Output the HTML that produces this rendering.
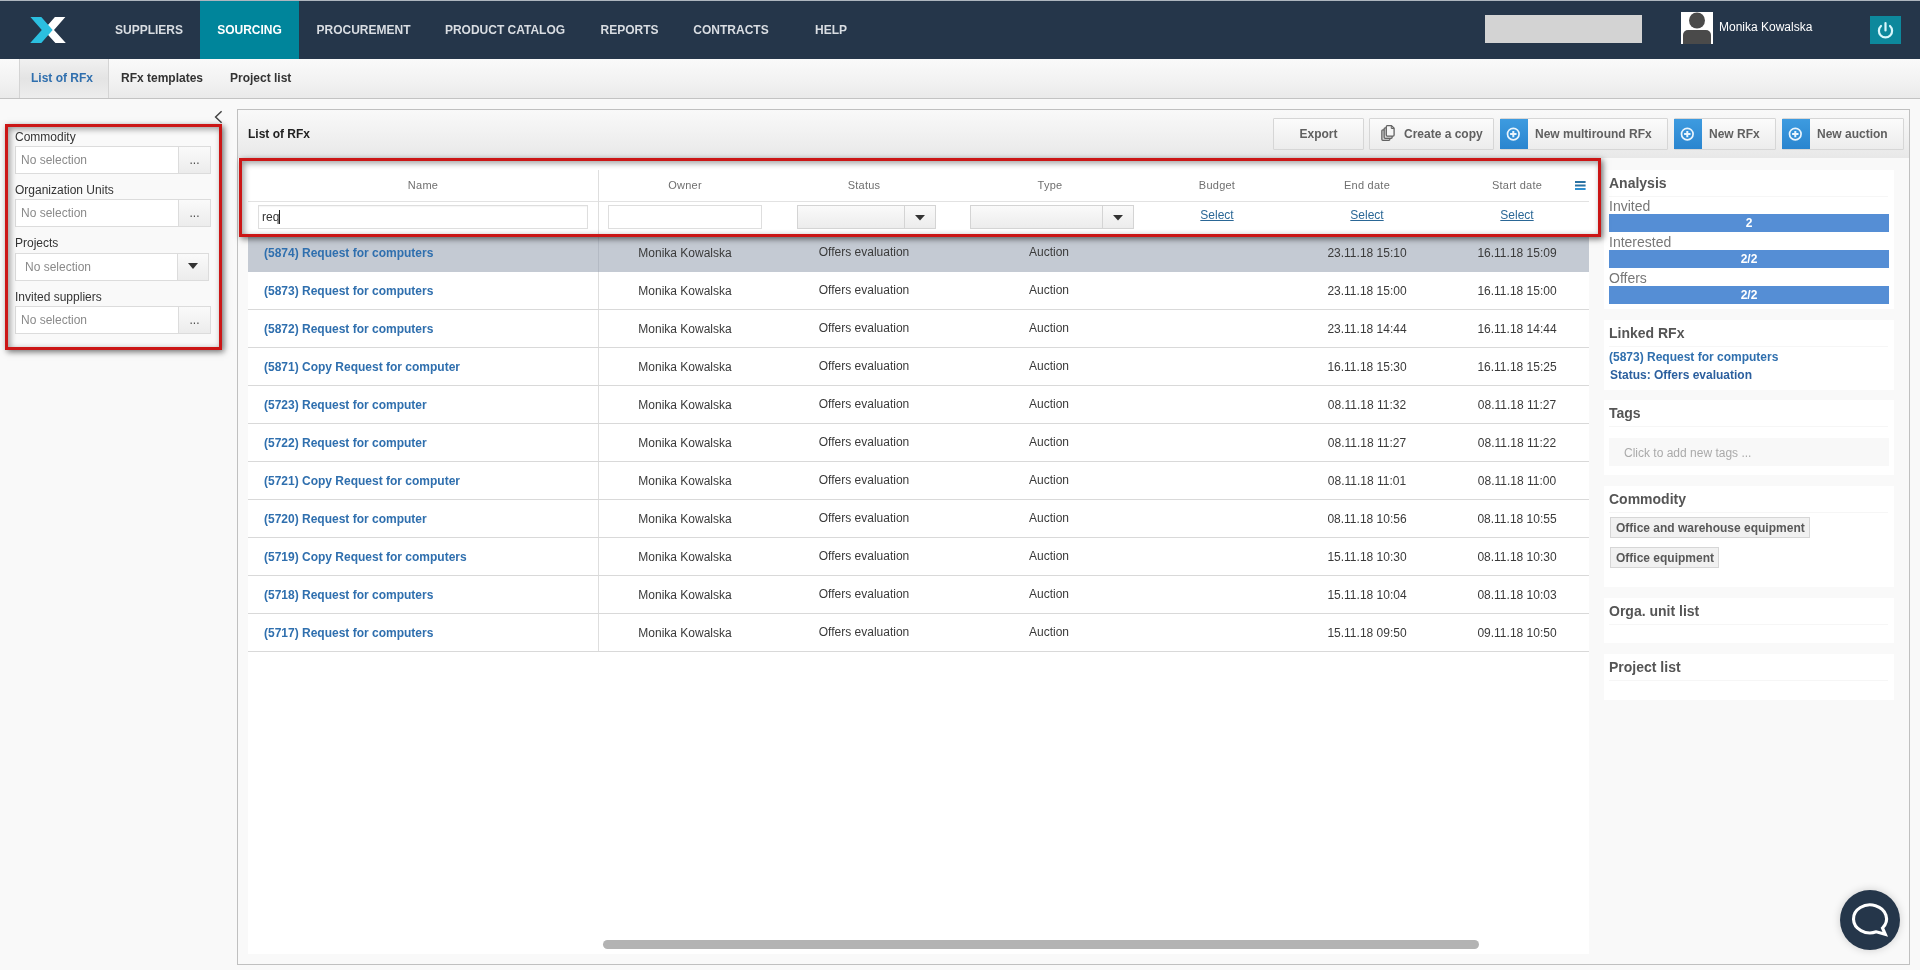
<!DOCTYPE html>
<html lang="en">
<head>
<meta charset="utf-8">
<title>List of RFx</title>
<style>
*{box-sizing:border-box;margin:0;padding:0}
html,body{width:1920px;height:970px;overflow:hidden}
body{position:relative;background:#f9f9f9;font-family:"Liberation Sans",Arial,sans-serif;font-size:12px;color:#333;line-height:1}
.abs{position:absolute}
#wrap{position:absolute;left:0;top:0;width:1920px;height:970px;overflow:hidden;will-change:transform}
/* ---------- top navigation ---------- */
#nav{position:absolute;left:0;top:0;width:1920px;height:59px;background:#25364a;box-shadow:inset 0 1px 0 #aeb6bf}
#nav .item{position:absolute;top:1px;height:58px;line-height:59px;color:#d9dde2;font-weight:bold;font-size:12px;text-align:center;white-space:nowrap}
#nav .item.active{background:#00859b;color:#fff}
#logo{position:absolute;left:29px;top:16px}
#search{position:absolute;left:1485px;top:15px;width:157px;height:28px;background:#d3d3d3}
#avatar{position:absolute;left:1681px;top:12px;width:32px;height:32px;background:#fff;overflow:hidden}
#uname{position:absolute;left:1719px;top:21px;color:#fff;font-size:12px;white-space:nowrap}
#power{position:absolute;left:1870px;top:16px;width:31px;height:28px;background:#0d889c}
/* ---------- sub navigation ---------- */
#subnav{position:absolute;left:0;top:59px;width:1920px;height:40px;background:linear-gradient(#fafafa,#f3f3f3 50%,#eaeaea);border-bottom:1px solid #c3c3c3}
#subnav .tab{position:absolute;top:0;height:39px;line-height:39px;font-weight:bold;font-size:12px;color:#333;white-space:nowrap}
#subnav .tab.active{left:19px;width:90px;padding-left:11px;color:#2f6fae;background:linear-gradient(#f1f1f1,#e4e4e4 50%,#ededed);border-left:1px solid #d4d4d4;border-right:1px solid #d4d4d4}
/* ---------- sidebar ---------- */
.flabel{position:absolute;left:15px;font-size:12px;color:#333;white-space:nowrap}
.fbox{position:absolute;left:15px;width:196px;height:28px;border:1px solid #dcdcdc;background:#fff}
.fbox .txt{position:absolute;left:5px;top:0;line-height:27px;color:#8a8a8a;font-size:12px}
.fbox .btn{position:absolute;right:0;top:0;width:32px;height:26px;border-left:1px solid #dcdcdc;background:linear-gradient(#fafafa,#ececec);text-align:center;color:#4a4a4a;font-weight:normal;line-height:27px;font-size:12px}
.redbox{position:absolute;border:3px solid #cb1616;box-shadow:2px 2px 6px rgba(0,0,0,.55), inset 2px 2px 6px rgba(0,0,0,.4);pointer-events:none}
/* ---------- main panel ---------- */
#panel{position:absolute;left:237px;top:109px;width:1673px;height:856px;border:1px solid #c0c0c0;background:#f9f9f9}
#phead{position:absolute;left:0;top:0;width:1671px;height:48px;background:linear-gradient(#f9f9f9,#f1f1f1 50%,#e8e8e8)}
#ptitle{position:absolute;left:10px;top:18px;font-weight:bold;font-size:12px;color:#222;white-space:nowrap}
.tbtn{position:absolute;top:8px;height:32px;border:1px solid #d6d6d6;background:linear-gradient(#fbfbfb,#ececec);font-weight:bold;font-size:12px;color:#606060;line-height:31px;white-space:nowrap;border-radius:1px}
.tbtn .ico{position:absolute;left:-1px;top:0;width:28px;height:30px;background:linear-gradient(#3d9be0,#2a85cf)}
#grid{position:absolute;left:10px;top:52px;width:1341px;height:792px;background:#fff}
.hcell{position:absolute;top:18px;font-size:11px;font-weight:normal;letter-spacing:.25px;color:#6f6f6f;text-align:center;white-space:nowrap;transform:translateX(-50%)}
.sel{position:absolute;top:47px;font-size:12px;color:#2a6796;text-decoration:underline;transform:translateX(-50%);white-space:nowrap}
.row{position:absolute;left:0;width:1341px;height:38px;border-bottom:1px solid #d9d9d9}
.row.selrow{background:#c4cad3;border-bottom-color:#c4cad3;box-shadow:none}
.row.selrow:after{content:"";position:absolute;left:350px;top:0;width:1px;height:38px;background:#b4bac4}
.row span{position:absolute;top:12px;font-size:12px;color:#3a3a3a;white-space:nowrap;transform:translateX(-50%)}
.row span.nm{left:16px;top:13px;transform:none;font-weight:bold;color:#2f6fae}
.row span.ow{left:437px;top:13px}
.row span.st{left:616px}
.row span.ty{left:801px}
.row span.ed{left:1119px;top:13px}
.row span.sd{left:1269px;top:13px}
/* ---------- right info column ---------- */
#side{position:absolute;left:1351px;top:48px;width:320px;height:806px;background:#f9f9f9}
.card{position:absolute;left:15px;width:290px;background:#fff}
.card h3{position:absolute;left:5px;top:6px;font-size:14px;font-weight:bold;color:#555;white-space:nowrap}
.card .hr{position:absolute;left:5px;right:6px;top:26px;height:1px;background:#f6f6f6}
.alabel{position:absolute;left:5px;font-size:14px;color:#777;white-space:nowrap}
.abar{position:absolute;left:5px;width:280px;height:18px;background:#558ed5;color:#fff;font-weight:bold;font-size:12px;text-align:center;line-height:18px}
.chip{position:absolute;left:5px;height:21px;border:1px solid #d6d6d6;background:#f1f1f1;font-size:12px;font-weight:bold;color:#585858;line-height:20px;padding:0 4px 0 5px;white-space:nowrap}
</style>
</head>
<body>
<div id="wrap">
<!-- NAV -->
<div id="nav">
  <svg id="logo" width="40" height="28" viewBox="0 0 40 28"><polygon points="25.9,1.100 36.350,1.100 25,14 36.800,26.900 26.400,26.900 14.600,14" fill="#fff"/><polygon points="1.400,1.100 12.300,1.100 23.650,14 12.300,26.900 1.200,26.900 12.800,14" fill="#2bbfe0"/></svg>
  <div class="item" style="left:100px;width:98px">SUPPLIERS</div>
  <div class="item active" style="left:200px;width:99px">SOURCING</div>
  <div class="item" style="left:300px;width:127px">PROCUREMENT</div>
  <div class="item" style="left:427px;width:156px">PRODUCT CATALOG</div>
  <div class="item" style="left:583px;width:93px">REPORTS</div>
  <div class="item" style="left:676px;width:110px">CONTRACTS</div>
  <div class="item" style="left:786px;width:90px">HELP</div>
  <div id="search"></div>
  <div id="avatar"><svg width="32" height="32" viewBox="0 0 32 32"><circle cx="16" cy="8.5" r="8" fill="#4a4a4a"/><path d="M2 32V23a5 5 0 0 1 5-5h18a5 5 0 0 1 5 5v9z" fill="#4a4a4a"/></svg></div>
  <div id="uname">Monika Kowalska</div>
  <div id="power"><svg width="31" height="28" viewBox="0 0 31 28"><path d="M11 10a6.600 6.600 0 1 0 9 0" fill="none" stroke="#d8f6fb" stroke-width="2.200" stroke-linecap="round"/><path d="M15.500 7v7.500" stroke="#d8f6fb" stroke-width="2.200" stroke-linecap="round"/></svg></div>
</div>
<!-- SUBNAV -->
<div id="subnav">
  <div class="tab active">List of RFx</div>
  <div class="tab" style="left:121px">RFx templates</div>
  <div class="tab" style="left:230px">Project list</div>
</div>
<!-- SIDEBAR -->
<svg class="abs" style="left:213px;top:110px" width="12" height="14" viewBox="0 0 12 14"><path d="M8.6 1.2L2.6 7l6 5.8" fill="none" stroke="#444" stroke-width="1.5"/></svg>
<div class="flabel" style="top:131px">Commodity</div>
<div class="fbox" style="top:146px"><span class="txt">No selection</span><span class="btn">...</span></div>
<div class="flabel" style="top:184px">Organization Units</div>
<div class="fbox" style="top:199px"><span class="txt">No selection</span><span class="btn">...</span></div>
<div class="flabel" style="top:237px">Projects</div>
<div class="fbox" style="top:253px;width:194px"><span class="txt" style="left:9px">No selection</span><span class="btn" style="width:31px"><svg width="12" height="8" viewBox="0 0 12 8" style="position:absolute;left:9px;top:8px"><polygon points="1,1 11,1 6,7" fill="#333"/></svg></span></div>
<div class="flabel" style="top:291px">Invited suppliers</div>
<div class="fbox" style="top:306px"><span class="txt">No selection</span><span class="btn">...</span></div>
<div class="redbox" style="left:5px;top:124px;width:217px;height:226px"></div>
<!-- MAIN PANEL -->
<div id="panel">
  <div id="phead">
    <div id="ptitle">List of RFx</div>
    <div class="tbtn" style="left:1035px;width:91px;text-align:center">Export</div>
    <div class="tbtn" style="left:1131px;width:125px"><svg width="16" height="17" viewBox="0 0 16 17" style="position:absolute;left:10px;top:6px"><rect x="1.850" y="4.800" width="8" height="10.500" rx="1" fill="#dcdcdc" stroke="#636363" stroke-width="1.300"/><rect x="4.150" y="2.800" width="8" height="10.500" rx="1" fill="#dcdcdc" stroke="#636363" stroke-width="1.300"/><path d="M7.300 .650h4.200l2.600 2.600v6.850a1 1 0 0 1-1 1h-5.800a1 1 0 0 1-1-1v-8.450a1 1 0 0 1 1-1z" fill="#f6f6f6" stroke="#636363" stroke-width="1.300" stroke-linejoin="round"/><path d="M11.300 .900v2.600h2.600" fill="none" stroke="#636363" stroke-width="1"/></svg><span style="position:absolute;left:34px">Create a copy</span></div>
    <div class="tbtn" style="left:1262px;width:168px"><span class="ico"><svg width="28" height="30" viewBox="0 0 28 30" style="position:absolute;left:0;top:0"><circle cx="13.300" cy="15.100" r="5.800" fill="none" stroke="#eaf5fd" stroke-width="1.700"/><path d="M13.300 11.900v6.400M10.100 15.100h6.400" stroke="#eaf5fd" stroke-width="2"/></svg></span><span style="position:absolute;left:34px">New multiround RFx</span></div>
    <div class="tbtn" style="left:1436px;width:102px"><span class="ico"><svg width="28" height="30" viewBox="0 0 28 30" style="position:absolute;left:0;top:0"><circle cx="13.300" cy="15.100" r="5.800" fill="none" stroke="#eaf5fd" stroke-width="1.700"/><path d="M13.300 11.900v6.400M10.100 15.100h6.400" stroke="#eaf5fd" stroke-width="2"/></svg></span><span style="position:absolute;left:34px">New RFx</span></div>
    <div class="tbtn" style="left:1544px;width:122px"><span class="ico"><svg width="28" height="30" viewBox="0 0 28 30" style="position:absolute;left:0;top:0"><circle cx="13.300" cy="15.100" r="5.800" fill="none" stroke="#eaf5fd" stroke-width="1.700"/><path d="M13.300 11.900v6.400M10.100 15.100h6.400" stroke="#eaf5fd" stroke-width="2"/></svg></span><span style="position:absolute;left:34px">New auction</span></div>
  </div>
  <div id="grid">
    <div class="abs" style="left:-6px;top:-3px;width:1356px;height:74px;background:#fff"></div>
    <div class="hcell" style="left:175px">Name</div>
    <div class="hcell" style="left:437px">Owner</div>
    <div class="hcell" style="left:616px">Status</div>
    <div class="hcell" style="left:802px">Type</div>
    <div class="hcell" style="left:969px">Budget</div>
    <div class="hcell" style="left:1119px">End date</div>
    <div class="hcell" style="left:1269px">Start date</div>
    <svg class="abs" style="left:1326.500px;top:19px" width="11" height="9" viewBox="0 0 11 9"><path d="M0 1h10.600M0 4.500h10.600" stroke="#2a72a3" stroke-width="2"/><path d="M0 8h10.600" stroke="#2e8fd0" stroke-width="2"/></svg>
    <div class="abs" style="left:0;top:39px;width:1341px;height:1px;background:#e2e2e2"></div>
    <div class="abs" style="left:350px;top:8px;width:1px;height:482px;background:#dedede"></div>
    <div class="abs" style="left:10px;top:43px;width:330px;height:24px;border:1px solid #dedede;background:#fff;box-shadow:inset 0 1px 1px rgba(0,0,0,.04)"><span class="abs" style="left:3px;top:5px;font-size:12px;color:#333">req</span><span class="abs" style="left:20px;top:4px;width:1px;height:14px;background:#222"></span></div>
    <div class="abs" style="left:360px;top:43px;width:154px;height:24px;border:1px solid #dedede;background:#fff"></div>
    <div class="abs" style="left:549px;top:43px;width:139px;height:24px;border:1px solid #d4d4d4;background:linear-gradient(#fafafa,#ececec)"><span class="abs" style="right:30px;top:0;width:1px;height:22px;background:#d4d4d4"></span><svg width="12" height="8" viewBox="0 0 12 8" style="position:absolute;right:9px;top:8px"><polygon points="1,1 11,1 6,6.5" fill="#333"/></svg></div>
    <div class="abs" style="left:722px;top:43px;width:164px;height:24px;border:1px solid #d4d4d4;background:linear-gradient(#fafafa,#ececec)"><span class="abs" style="right:30px;top:0;width:1px;height:22px;background:#d4d4d4"></span><svg width="12" height="8" viewBox="0 0 12 8" style="position:absolute;right:9px;top:8px"><polygon points="1,1 11,1 6,6.5" fill="#333"/></svg></div>
    <div class="sel" style="left:969px">Select</div>
    <div class="sel" style="left:1119px">Select</div>
    <div class="sel" style="left:1269px">Select</div>
    <div class="row selrow" style="top:72px"><span class="nm">(5874) Request for computers</span><span class="ow">Monika Kowalska</span><span class="st">Offers evaluation</span><span class="ty">Auction</span><span class="ed">23.11.18 15:10</span><span class="sd">16.11.18 15:09</span></div>
    <div class="row" style="top:110px"><span class="nm">(5873) Request for computers</span><span class="ow">Monika Kowalska</span><span class="st">Offers evaluation</span><span class="ty">Auction</span><span class="ed">23.11.18 15:00</span><span class="sd">16.11.18 15:00</span></div>
    <div class="row" style="top:148px"><span class="nm">(5872) Request for computers</span><span class="ow">Monika Kowalska</span><span class="st">Offers evaluation</span><span class="ty">Auction</span><span class="ed">23.11.18 14:44</span><span class="sd">16.11.18 14:44</span></div>
    <div class="row" style="top:186px"><span class="nm">(5871) Copy Request for computer</span><span class="ow">Monika Kowalska</span><span class="st">Offers evaluation</span><span class="ty">Auction</span><span class="ed">16.11.18 15:30</span><span class="sd">16.11.18 15:25</span></div>
    <div class="row" style="top:224px"><span class="nm">(5723) Request for computer</span><span class="ow">Monika Kowalska</span><span class="st">Offers evaluation</span><span class="ty">Auction</span><span class="ed">08.11.18 11:32</span><span class="sd">08.11.18 11:27</span></div>
    <div class="row" style="top:262px"><span class="nm">(5722) Request for computer</span><span class="ow">Monika Kowalska</span><span class="st">Offers evaluation</span><span class="ty">Auction</span><span class="ed">08.11.18 11:27</span><span class="sd">08.11.18 11:22</span></div>
    <div class="row" style="top:300px"><span class="nm">(5721) Copy Request for computer</span><span class="ow">Monika Kowalska</span><span class="st">Offers evaluation</span><span class="ty">Auction</span><span class="ed">08.11.18 11:01</span><span class="sd">08.11.18 11:00</span></div>
    <div class="row" style="top:338px"><span class="nm">(5720) Request for computer</span><span class="ow">Monika Kowalska</span><span class="st">Offers evaluation</span><span class="ty">Auction</span><span class="ed">08.11.18 10:56</span><span class="sd">08.11.18 10:55</span></div>
    <div class="row" style="top:376px"><span class="nm">(5719) Copy Request for computers</span><span class="ow">Monika Kowalska</span><span class="st">Offers evaluation</span><span class="ty">Auction</span><span class="ed">15.11.18 10:30</span><span class="sd">08.11.18 10:30</span></div>
    <div class="row" style="top:414px"><span class="nm">(5718) Request for computers</span><span class="ow">Monika Kowalska</span><span class="st">Offers evaluation</span><span class="ty">Auction</span><span class="ed">15.11.18 10:04</span><span class="sd">08.11.18 10:03</span></div>
    <div class="row" style="top:452px"><span class="nm">(5717) Request for computers</span><span class="ow">Monika Kowalska</span><span class="st">Offers evaluation</span><span class="ty">Auction</span><span class="ed">15.11.18 09:50</span><span class="sd">09.11.18 10:50</span></div>
    <div class="abs" style="left:355px;top:778px;width:876px;height:9px;border-radius:5px;background:#b3b3b3"></div>
  </div>
  <div id="side">
    <div class="abs" style="left:0;top:0;width:9px;height:76px;background:#fff"></div>
    <div class="card" style="top:12px;height:139px"><h3>Analysis</h3><div class="hr"></div>
      <div class="alabel" style="top:29px">Invited</div><div class="abar" style="top:44px">2</div>
      <div class="alabel" style="top:65px">Interested</div><div class="abar" style="top:80px">2/2</div>
      <div class="alabel" style="top:101px">Offers</div><div class="abar" style="top:116px">2/2</div>
    </div>
    <div class="card" style="top:162px;height:70px"><h3>Linked RFx</h3><div class="hr"></div>
      <div class="abs" style="left:5px;top:31px;font-size:12px;font-weight:bold;color:#2f6fae;white-space:nowrap">(5873) Request for computers</div>
      <div class="abs" style="left:6px;top:49px;font-size:12px;font-weight:bold;color:#2b5f9e;white-space:nowrap">Status: Offers evaluation</div>
    </div>
    <div class="card" style="top:242px;height:75px"><h3>Tags</h3><div class="hr"></div>
      <div class="abs" style="left:5px;top:38px;width:280px;height:28px;background:#f8f8f8"><span class="abs" style="left:15px;top:9px;font-size:12px;color:#aaa;white-space:nowrap">Click to add new tags ...</span></div>
    </div>
    <div class="card" style="top:328px;height:101px"><h3>Commodity</h3><div class="hr"></div>
      <div class="chip" style="left:6px;top:31px">Office and warehouse equipment</div>
      <div class="chip" style="left:6px;top:61px">Office equipment</div>
    </div>
    <div class="card" style="top:440px;height:45px"><h3>Orga. unit list</h3><div class="hr"></div></div>
    <div class="card" style="top:496px;height:46px"><h3>Project list</h3><div class="hr"></div></div>
  </div>
</div>
<div class="redbox" style="left:239px;top:158px;width:1362px;height:79px"></div>
<div class="abs" style="left:1840px;top:890px;width:60px;height:60px;border-radius:50%;background:#25364a;box-shadow:0 0 8px rgba(0,0,0,.18)"><svg width="60" height="60" viewBox="0 0 60 60"><path d="M42.500 38A16.500 14 0 1 0 36.300 41.800L45.300 44.300Z" fill="none" stroke="#fff" stroke-width="3.100" stroke-linejoin="miter" stroke-miterlimit="6"/></svg></div>
</div>
</body>
</html>
